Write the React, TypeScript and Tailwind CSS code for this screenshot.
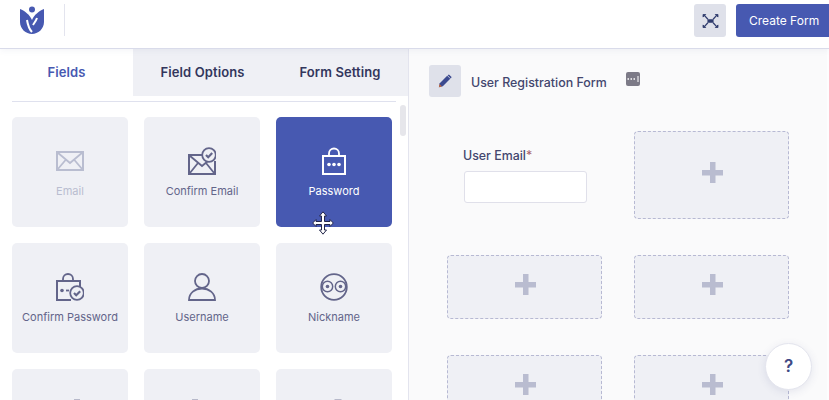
import type { ReactNode } from 'react';

const Ico = ({ children }: { children: ReactNode }) => (
  <svg viewBox="0 0 28 28" className="w-[28px] h-[28px]" fill="none" stroke="currentColor" strokeWidth="1.8">
    {children}
  </svg>
);

const icons: Record<string, ReactNode> = {
  email: (
    <Ico>
      <rect x="1" y="5" width="26" height="18" strokeWidth="2" />
      <path d="M1.500 5.500 14 16 26.500 5.500M1.500 22.500 10 12.500M26.500 22.500 18 12.500" />
    </Ico>
  ),
  confirmEmail: (
    <Ico>
      <path d="M14 8H1v19h26V14" strokeWidth="2" />
      <path d="M1.500 8.500 14 19l6-5M1.500 26.500 10 16M26.500 26.500 18 16" />
      <circle cx="21" cy="8" r="6.800" fill="#eff0f5" />
      <path d="M18 8l2.200 2.200L24.200 6" strokeWidth="2.200" />
    </Ico>
  ),
  lock: (
    <Ico>
      <rect x="3" y="9" width="22" height="18" strokeWidth="2" />
      <path d="M9 9V6.500a5 5 0 0 1 10 0V9" />
      <circle cx="9" cy="17.500" r="1.800" fill="currentColor" stroke="none" />
      <circle cx="14" cy="17.500" r="1.800" fill="currentColor" stroke="none" />
      <circle cx="19" cy="17.500" r="1.800" fill="currentColor" stroke="none" />
    </Ico>
  ),
  confirmLock: (
    <Ico>
      <path d="M24 14V8H1v19h14" strokeWidth="2" />
      <path d="M7 8V6a5 5 0 0 1 10 0v2" />
      <circle cx="6" cy="17.500" r="1.800" fill="currentColor" stroke="none" />
      <path d="M10 17.500h3" />
      <circle cx="21" cy="20" r="6.800" fill="#eff0f5" />
      <path d="M18 20l2.200 2.200 4-4" strokeWidth="2.200" />
    </Ico>
  ),
  user: (
    <Ico>
      <circle cx="14" cy="8" r="7" />
      <path d="M1 27c0-7 6-11.500 13-11.500S27 20 27 27Z" />
    </Ico>
  ),
  nickname: (
    <Ico>
      <circle cx="14" cy="14" r="12.800" />
      <circle cx="7.500" cy="13.500" r="5.200" strokeWidth="1.500" />
      <circle cx="20.500" cy="13.500" r="5.200" strokeWidth="1.500" />
      <circle cx="7.500" cy="13.500" r="1.800" fill="currentColor" stroke="none" />
      <circle cx="20.500" cy="13.500" r="1.800" fill="currentColor" stroke="none" />
    </Ico>
  ),
  partialA: (
    <Ico>
      <path d="M18 1.500h6" />
    </Ico>
  ),
  partialB: (
    <Ico>
      <path d="M4 1.500h6" />
    </Ico>
  ),
  partialC: (
    <Ico>
      <path d="M14.500 1.500h7" />
    </Ico>
  ),
};

const cards = [
  { id: 'email', label: 'Email', icon: 'email', state: 'off' },
  { id: 'confirm-email', label: 'Confirm Email', icon: 'confirmEmail', state: '' },
  { id: 'password', label: 'Password', icon: 'lock', state: 'on' },
  { id: 'confirm-password', label: 'Confirm Password', icon: 'confirmLock', state: '' },
  { id: 'username', label: 'Username', icon: 'user', state: '' },
  { id: 'nickname', label: 'Nickname', icon: 'nickname', state: '' },
  { id: 'a', label: '', icon: 'partialA', state: '' },
  { id: 'b', label: '', icon: 'partialB', state: '' },
  { id: 'c', label: '', icon: 'partialC', state: '' },
];

function FieldCard({ label, icon, state }: { label: string; icon: string; state: string }) {
  const tone =
    state === 'on'
      ? 'bg-[#4759b1] text-white'
      : state === 'off'
        ? 'bg-[#eff0f5] text-[#b9bdd0]'
        : 'bg-[#eff0f5] text-[#63658a]';
  return (
    <div className={`h-[110px] rounded-[5px] flex flex-col items-center pt-[30px] ${tone}`}>
      {icons[icon]}
      {label && <span className="mt-[8px] text-[11px] leading-[16px] whitespace-nowrap">{label}</span>}
    </div>
  );
}

function DropZone({ tall }: { tall?: boolean }) {
  return (
    <div className={`${tall ? 'h-[88px]' : 'h-[64px]'} rounded-[4px] border border-dashed border-[#b7b9d3] bg-[#eff0f5] flex items-center justify-center pb-[5px] pl-[2px]`}>
      <svg viewBox="0 0 21 21" className="w-[21px] h-[21px]" fill="#b9bcd0">
        <rect x="8" y="0" width="5.500" height="21" />
        <rect x="0" y="8" width="21" height="5.500" />
      </svg>
    </div>
  );
}

export default function App() {
  return (
    <div className="relative w-[829px] h-[400px] overflow-hidden bg-white font-['Inter',sans-serif]">
      <header className="relative z-10 h-[49px] flex items-start border-b border-[#d9dbea] bg-white shadow-[0_2px_6px_rgba(70,80,140,0.06)]">
        <div className="w-[65px] h-[48px] flex pt-[4px]">
          <svg viewBox="0 0 28 32" className="ml-[18px] mt-[1px] w-[28px] h-[32px]" fill="#4759b1">
            <circle cx="14" cy="4.500" r="3" />
            <path d="M2 4C7 6 12 10 14 15 16 10 21 6 26 4V17C26 24 20 29 14 29 8 29 2 24 2 17Z" />
            <path d="M9 15C10 21 12 25 14 27M19 13C18 16 16 18 15 20" fill="none" stroke="#fff" strokeWidth="2" />
          </svg>
          <div className="ml-auto w-px h-[32px] bg-[#e3e4ee]" />
        </div>
        <div className="ml-auto flex gap-[10px] pt-[4px]">
          <button className="w-[32px] h-[33px] rounded-[3px] bg-[#dfe1ea] flex items-center justify-center">
            <svg viewBox="0 0 18 16" className="w-[17px] h-[14px]" fill="#2f3b6d" stroke="#2f3b6d">
              <rect x="5.500" y="6" width="7" height="4" stroke="none" />
              <path d="M2 1.500 6 6M16 1.500 12 6M2 14.500 6 10M16 14.500 12 10" strokeWidth="1.400" fill="none" />
              <path d="M.5 .5h3l-3 3ZM17.500 .5h-3l3 3ZM.5 15.500h3l-3-3ZM17.500 15.500h-3l3-3Z" strokeWidth="1" />
            </svg>
          </button>
          <button className="w-[93px] h-[33px] rounded-l-[3px] bg-[#4759b1] text-white text-[12px] text-left pl-[13px] whitespace-nowrap">
            Create Form
          </button>
        </div>
      </header>

      <div className="flex h-[351px]">
        <aside className="w-[409px] shrink-0 border-r border-[#e3e4ee] bg-white">
          <nav className="flex h-[47px] text-[13px] font-semibold tracking-[0.1px]">
            <div className="w-[133px] flex items-center justify-center text-[#4759b1]">Fields</div>
            <div className="w-[139px] flex items-center justify-center bg-[#eff0f5] text-[#33365c]">Field Options</div>
            <div className="flex-1 flex items-center justify-center bg-[#eff0f5] text-[#33365c]">Form Setting</div>
          </nav>
          <div className="mx-[12px] mt-[5px] h-px bg-[#dfe1ee]" />
          <div className="mt-[15px] mx-[12px] grid grid-cols-3 gap-x-[16px] gap-y-[16px] w-[380px]">
            {cards.map(c => (
              <FieldCard key={c.id} label={c.label} icon={c.icon} state={c.state} />
            ))}
          </div>
        </aside>

        <main className="flex-1 bg-[#fafafb] border-r-2 border-[#fdfdfe] pl-[38px] pt-[16px]">
          <div className="flex items-start h-[32px] -ml-[18px]">
            <div className="w-[32px] h-[32px] rounded-[3px] bg-[#dfe1ea] flex items-center justify-center">
              <svg viewBox="0 0 16 16" className="w-[14px] h-[14px]">
                <path d="M1 15l1-4.500L10.500 2 14 5.500 5.500 14Z" fill="#3c4a8f" />
                <path d="M11.500 1l1-.5 3 3-.5 1L14.500 5 11 1.500Z" fill="#3c4a8f" />
                <path d="M1 15l.8-3.500 2.700 2.700Z" fill="#c0663d" />
              </svg>
            </div>
            <span className="ml-[10px] mt-[10px] text-[12.400px] leading-[16px] font-medium text-[#43466e] whitespace-nowrap">
              User Registration Form
            </span>
            <svg viewBox="0 0 14 14" className="ml-[19px] mt-[7px] w-[14px] h-[14px]">
              <rect width="14" height="14" rx="2" fill="#7c7a87" />
              <path d="M1.500 7h1.500M4.500 7h1.500M7.500 7h1.500" stroke="#fff" strokeWidth="1.500" />
              <path d="M12 4v6" stroke="#fff" strokeWidth="1" />
            </svg>
          </div>

          <div className="mt-[34px] grid grid-cols-[155px_155px] gap-x-[32px] gap-y-[36px]">
            <div className="h-[88px] pl-[16px] pt-[17px]">
              <label className="block h-[16px] text-[12.400px] leading-[16px] font-medium text-[#43466e]">
                User Email<span className="font-normal text-[#a8626c]">*</span>
              </label>
              <input className="block mt-[7px] ml-px w-[123px] h-[32px] rounded-[3px] border border-[#e0e0ea] bg-white" />
            </div>
            <DropZone tall />
            <DropZone />
            <DropZone />
            <DropZone />
            <DropZone />
          </div>
        </main>
      </div>

      {/* scrollbar thumb */}
      <div className="absolute left-[400px] top-[105px] w-[6px] h-[31px] rounded-[3px] bg-[#e6e6eb]" />

      {/* move cursor */}
      <svg viewBox="0 0 22 24" className="absolute left-[312px] top-[211px] w-[22px] h-[24px]" fill="#fff" stroke="#23264a" strokeWidth="1">
        <path d="M11 .8 14.500 5H12.500V10.500H18V8.500L21.300 12 18 15.500V13.500H12.500V19H14.500L11 23.200 7.500 19H9.500V13.500H4V15.500L.7 12 4 8.500V10.500H9.500V5H7.500Z" />
      </svg>

      {/* help */}
      <button className="absolute z-20 left-[765px] top-[343px] w-[47px] h-[47px] rounded-full bg-white border border-[#e4e5ee] shadow-[0_2px_8px_rgba(70,80,140,0.12)] text-[17px] font-semibold text-[#3f4a85] flex items-center justify-center">
        ?
      </button>
    </div>
  );
}
